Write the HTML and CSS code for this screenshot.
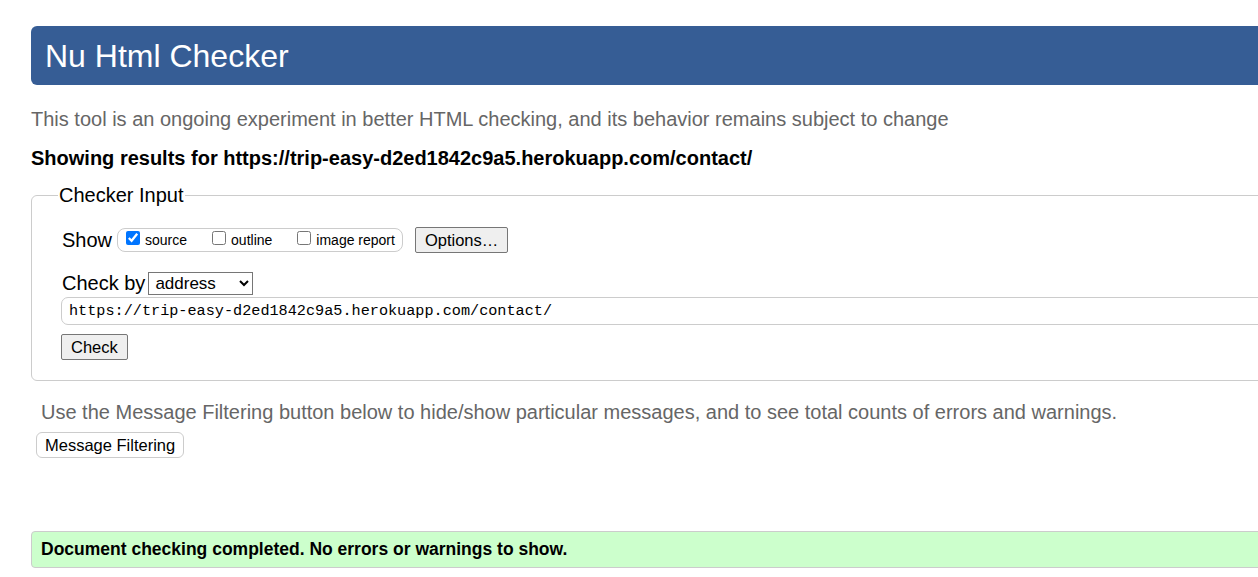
FILE: index.html
```html
<!DOCTYPE html>
<html>
<head>
<meta charset="utf-8">
<title>Nu Html Checker</title>
<link rel="stylesheet" href="styles.css">
</head>
<body>
<div class="page">
  <h1 class="banner">Nu Html Checker</h1>
  <p class="intro">This tool is an ongoing experiment in better HTML checking, and its behavior remains subject to change</p>
  <p class="results">Showing results for https://trip-easy-d2ed1842c9a5.herokuapp.com/contact/</p>
  <form class="checker">
    <fieldset class="box">
      <legend class="legend">Checker Input</legend>
      <div class="row show-row">
        <span class="label">Show</span>
        <span class="opts">
          <label class="opt"><input type="checkbox" checked> source</label>
          <label class="opt"><input type="checkbox"> outline</label>
          <label class="opt"><input type="checkbox"> image report</label>
        </span>
        <button type="button" class="btn">Options…</button>
      </div>
      <div class="row by-row">
        <span class="label">Check by</span>
        <select class="sel"><option>address</option></select>
      </div>
      <input class="url" type="text" value="https://trip-easy-d2ed1842c9a5.herokuapp.com/contact/">
      <div class="row check-row">
        <button type="button" class="btn">Check</button>
      </div>
    </fieldset>
  </form>
  <p class="hint">Use the Message Filtering button below to hide/show particular messages, and to see total counts of errors and warnings.</p>
  <button type="button" class="filter">Message Filtering</button>
  <div class="success">Document checking completed. No errors or warnings to show.</div>
</div>
</body>
</html>
```
FILE: styles.css
```css
html, body {
  margin: 0;
  padding: 0;
  background: #fff;
  overflow: hidden;
}
body {
  font-family: "Liberation Sans", Arial, sans-serif;
  color: #000;
}
.page {
  width: 1300px;
  padding: 26px 0 0 31px;
}
.banner {
  margin: 0;
  height: 59px;
  line-height: 60px;
  background: #365d95;
  color: #fff;
  font-size: 32px;
  font-weight: normal;
  padding-left: 14px;
  border-radius: 6px 0 0 6px;
}
.intro {
  margin: 22px 0 0 0;
  font-size: 20px;
  line-height: 24px;
  color: #666;
}
.results {
  margin: 15px 0 0 0;
  font-size: 20px;
  line-height: 24px;
  font-weight: bold;
}
.checker {
  margin: 13px 0 0 0;
}
.box {
  margin: 0;
  border: 1px solid #ccc;
  border-radius: 6px;
  padding: 19px 30px 20px 30px;
}
.legend {
  font-size: 20px;
  padding: 0 1px;
  margin-left: -4px;
  line-height: 24px;
}
.row {
  display: flex;
  align-items: center;
}
.label {
  font-size: 20px;
  margin-right: 3px;
}
.show-row {
  height: 28px;
}
.opts {
  display: inline-flex;
  align-items: center;
  gap: 25px;
  border: 1px solid #ccc;
  border-radius: 8px;
  height: 22px;
  padding: 0 7px 0 8px;
  font-size: 14px;
  margin-left: 2px;
}
.opt {
  display: inline-flex;
  align-items: center;
  gap: 5px;
  white-space: nowrap;
}
.opt input {
  margin: 0 0 4px 0;
  width: 14px;
  height: 14px;
}
.btn {
  font-family: "Liberation Sans", Arial, sans-serif;
  font-size: 16.5px;
  height: 25px;
  padding: 0 9px;
  background: #efefef;
  border: 1px solid #767676;
  border-radius: 2px;
  color: #000;
}
.show-row .btn {
  margin-left: 12px;
}
.by-row {
  margin-top: 17px;
  height: 24px;
}
.sel {
  font-family: "Liberation Sans", Arial, sans-serif;
  font-size: 17px;
  height: 23px;
  width: 105px;
  border: 1px solid #767676;
  border-radius: 0;
  padding: 0 2px;
  background: #fff;
  margin-left: 0;
}
.url {
  display: block;
  box-sizing: border-box;
  width: 1300px;
  height: 28px;
  margin: 2px 0 9px -1px;
  border: 1px solid #ccc;
  border-radius: 7px;
  padding: 0 7px;
  font-family: "Liberation Mono", "DejaVu Sans Mono", monospace;
  font-size: 15.2px;
  color: #000;
}
.check-row {
  margin-left: -1px;
}
.row .btn {
  height: 26px;
}
.hint {
  margin: 19px 0 0 10px;
  font-size: 20px;
  line-height: 24px;
  color: #666;
}
.filter {
  display: block;
  margin: 8px 0 0 5px;
  font-family: "Liberation Sans", Arial, sans-serif;
  font-size: 16.5px;
  height: 26px;
  padding: 0 8px;
  background: #fff;
  border: 1px solid #ccc;
  border-radius: 6px;
  color: #000;
}
.success {
  margin-top: 73px;
  box-sizing: border-box;
  height: 37px;
  line-height: 35px;
  background: #ccffcc;
  border: 1px solid #ccc;
  border-radius: 4px;
  padding-left: 9px;
  font-size: 17.5px;
  font-weight: bold;
}
```
